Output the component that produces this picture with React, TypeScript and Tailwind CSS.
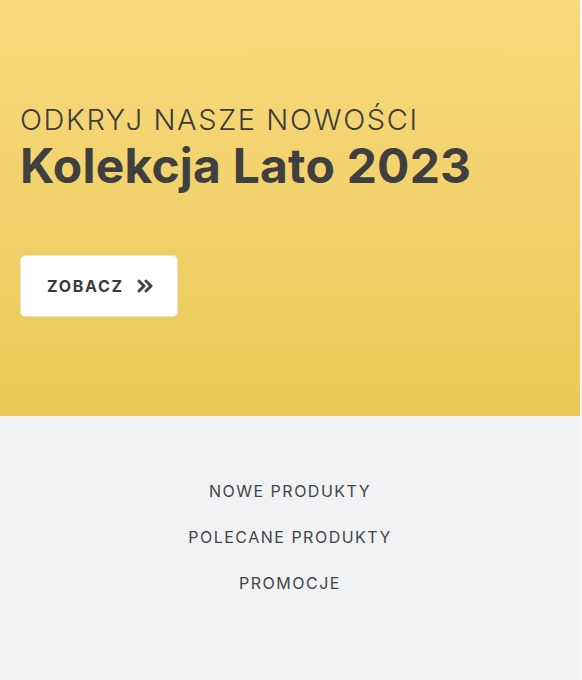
import React from "react";

export default function App() {
  const font = { fontFamily: "Inter, 'Noto Sans', sans-serif" };
  return (
    <div className="w-[582px] h-[680px] bg-[#f7f7f7]" style={font}>
      <div className="w-[580px]">
        <section className="h-[416px] bg-gradient-to-b from-[#f8da7e] to-[#ebc955] pl-5 pt-[101px]">
          <p className="text-[29px] leading-[38px] font-light text-[#3c3c3c] tracking-[1.6px]">
            ODKRYJ NASZE NOWOŚCI
          </p>
          <h1 className="text-[48px] leading-[54px] font-bold text-[#3f3f3f] tracking-[0.2px]">
            Kolekcja Lato 2023
          </h1>
          <button className="mt-[62px] w-[158px] h-[62px] bg-white rounded-[5px] border border-[#e6e1d0] flex items-center pl-[26px] gap-[13px]">
            <span className="text-[16px] font-bold tracking-[1.7px] text-[#3b3b3b]">ZOBACZ</span>
            <svg width="16" height="14" viewBox="0 0 16 14" fill="none" stroke="#444" strokeWidth="3" strokeLinecap="round" strokeLinejoin="round">
              <path d="M2 2l5 5-5 5" />
              <path d="M9 2l5 5-5 5" />
            </svg>
          </button>
        </section>
        <section className="h-[264px] bg-[#f1f2f4] flex flex-col items-center pt-[63px] gap-[22px]">
          {["NOWE PRODUKTY", "POLECANE PRODUKTY", "PROMOCJE"].map((t) => (
            <a key={t} className="text-[16px] leading-[24px] text-[#444] tracking-[1.5px]">
              {t}
            </a>
          ))}
        </section>
      </div>
    </div>
  );
}
